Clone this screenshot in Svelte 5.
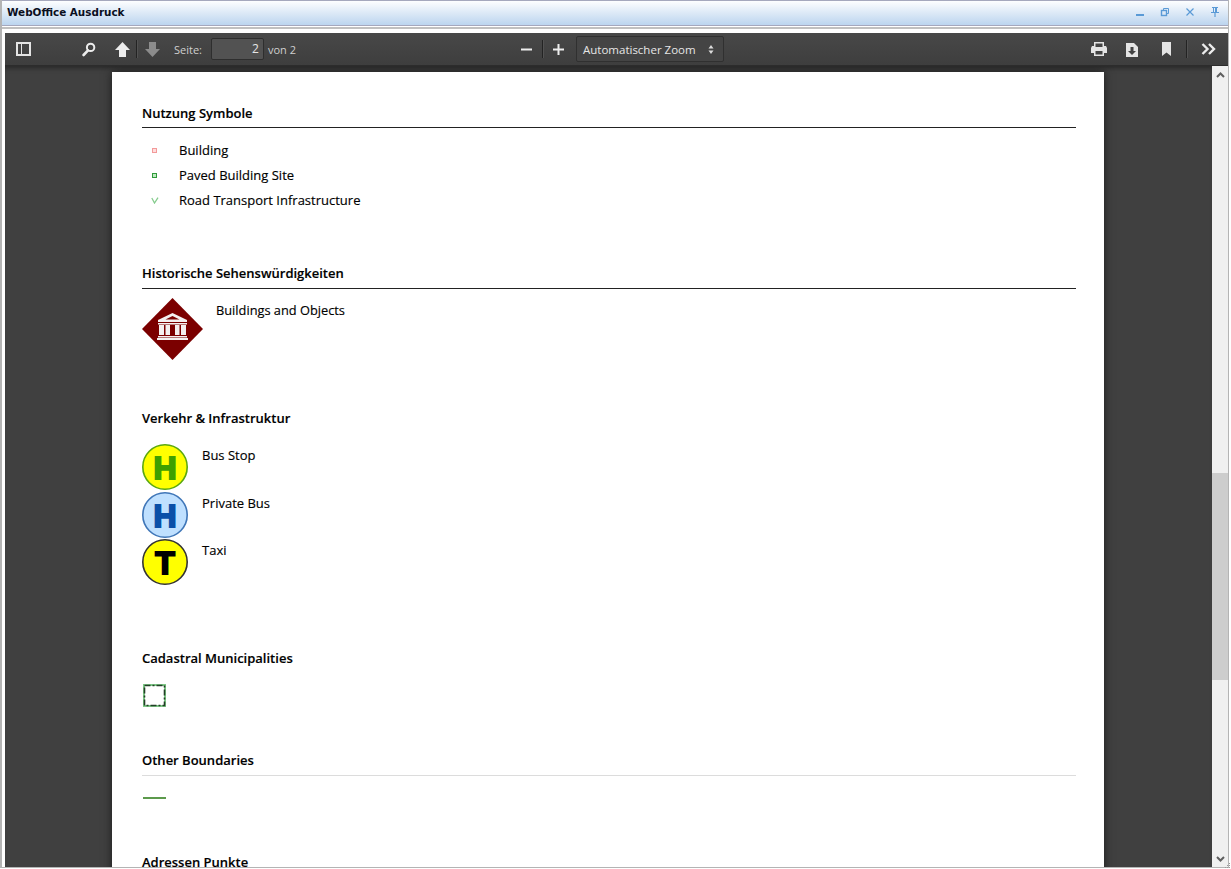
<script lang="ts">
  const usage = [
    { label: 'Building', kind: 'red' },
    { label: 'Paved Building Site', kind: 'green' },
    { label: 'Road Transport Infrastructure', kind: 'check' }
  ]
  const transport = [
    { label: 'Bus Stop', letter: 'H', fill: '#ffff00', ring: '#5aa80f', ink: '#3fa000' },
    { label: 'Private Bus', letter: 'H', fill: '#bfe0ff', ring: '#3f76b8', ink: '#0a4fa8' },
    { label: 'Taxi', letter: 'T', fill: '#ffff00', ring: '#333', ink: '#000' }
  ]
</script>

<div class="screen">
  <div class="window">
    <header class="titlebar">
      <span class="title">WebOffice Ausdruck</span>
      <div class="controls">
        <svg width="10" height="10" viewBox="0 0 10 10"><rect x="1" y="7" width="8" height="2" fill="#5a9ad6" /></svg>
        <svg width="10" height="10" viewBox="0 0 10 10" fill="none" stroke="#5a9ad6"><rect x="1.500" y="3.500" width="5" height="5" stroke-width="1.400" /><path d="M3.500 3V1.500h5v5H7" /></svg>
        <svg width="10" height="10" viewBox="0 0 10 10" fill="none" stroke="#5a9ad6" stroke-width="1.200"><path d="M1.500 1.500l7 7M8.500 1.500l-7 7" /></svg>
        <svg width="10" height="10" viewBox="0 0 10 10" fill="#5a9ad6"><path fill-rule="evenodd" d="M2 0h6v1H7v4h2v1H5.600v4H4.400V6H1V5h2V1H2zM4 1v4h1V1z" /></svg>
      </div>
    </header>

    <div class="frame">
      <div class="toolbar">
        <svg class="tb-sidebar" width="15" height="14" viewBox="0 0 15 14"><path fill-rule="evenodd" fill="#e4e4e4" d="M0 0h15v14H0zM2 2v10h3V2zM6 2v10h7V2z" /></svg>
        <svg class="tb-search" width="14" height="15" viewBox="0 0 14 15" fill="none" stroke="#ececec"><circle cx="8.600" cy="5.400" r="3.700" stroke-width="2" /><path d="M6 8.400L1.600 13" stroke-width="2.600" stroke-linecap="round" /></svg>
        <svg class="tb-up" width="15" height="15" viewBox="0 0 15 15"><path fill="#ededed" d="M7.500 0L15 8h-4v7H4V8H0z" /></svg>
        <span class="sep"></span>
        <svg class="tb-down" width="15" height="15" viewBox="0 0 15 15"><path fill="#8c8c8c" d="M4 0h7v7h4l-7.500 8L0 7h4z" /></svg>
        <span class="label seite">Seite:</span>
        <span class="page-input">2</span>
        <span class="label von">von 2</span>

        <div class="zoom">
          <svg width="11" height="11" viewBox="0 0 11 11"><rect y="4.500" width="11" height="2" fill="#ededed" /></svg>
          <span class="sep"></span>
          <svg width="11" height="11" viewBox="0 0 11 11"><path fill="#ededed" d="M4.500 0h2v4.500H11v2H6.500V11h-2V6.500H0v-2h4.500z" /></svg>
          <div class="select">
            <span>Automatischer Zoom</span>
            <svg width="6" height="9" viewBox="0 0 6 9"><path fill="#dcdcdc" d="M3 0l2.500 3.400h-5zM3 9L.5 5.600h5z" /></svg>
          </div>
        </div>

        <div class="tools-right">
          <svg width="16" height="14" viewBox="0 0 16 14"><path fill-rule="evenodd" fill="#e4e4e4" d="M3 0h10v4h2l1 2v5h-3v3H3v-3H0V6l1-2h2zM4.500 1.500V5h7V1.500zM4.500 9v3.500h7V9z" /></svg>
          <svg class="tb-dl" width="12" height="15" viewBox="0 0 12 15"><path fill-rule="evenodd" fill="#e4e4e4" d="M0 1h8l4 4v10H0zM4.500 5v4H2l4 4 4-4H7.500V5z" /></svg>
          <svg class="tb-mark" width="9" height="14" viewBox="0 0 9 14"><path fill="#e4e4e4" d="M0 0h9v14L4.500 10.500 0 14z" /></svg>
          <span class="sep"></span>
          <svg class="tb-more" width="15" height="12" viewBox="0 0 15 12" fill="none" stroke="#ececec" stroke-width="2.400"><path d="M1.500 1l5 5-5 5M8 1l5 5-5 5" /></svg>
        </div>
      </div>

      <div class="body">
        <main class="viewer">
          <article class="page">
            <section class="s-usage">
              <h3 class="ruled">Nutzung Symbole</h3>
              <ul class="usage">
                {#each usage as row}
                  <li>
                    <span class="mark">
                      {#if row.kind === 'check'}
                        <svg width="8" height="7" viewBox="0 0 8 7" fill="none" stroke="#86cc8e" stroke-width="1.300"><path d="M.8 1l2.700 5L7 .6" /></svg>
                      {:else}
                        <span class="dot {row.kind}"></span>
                      {/if}
                    </span>
                    {row.label}
                  </li>
                {/each}
              </ul>
            </section>

            <section class="s-hist">
              <h3 class="ruled">Historische Sehenswürdigkeiten</h3>
              <div class="hist-row">
                <svg width="61" height="62" viewBox="0 0 61 62">
                  <polygon points="30.500,0 61,31 30.500,62 0,31" fill="#7b0000" />
                  <g fill="#f4f0f0">
                    <path d="M30.500 15l14.500 7v2H16v-2z" />
                    <rect x="16" y="25" width="29" height="1.500" />
                    <rect x="17" y="27" width="5" height="10" />
                    <rect x="23.500" y="27" width="4.500" height="10" />
                    <rect x="33" y="27" width="4.500" height="10" />
                    <rect x="39" y="27" width="5" height="10" />
                    <rect x="16" y="38" width="29" height="1.500" />
                    <rect x="15" y="40" width="31" height="2" />
                  </g>
                  <path d="M30.500 18l7 3.500h-14z" fill="#7b0000" />
                </svg>
                <span>Buildings and Objects</span>
              </div>
            </section>

            <section class="s-traffic">
              <h3>Verkehr &amp; Infrastruktur</h3>
              <div class="stops">
                {#each transport as stop}
                  <div class="stop">
                    <svg width="46" height="46" viewBox="0 0 46 46">
                      <circle cx="23" cy="23" r="22.200" fill={stop.fill} stroke={stop.ring} stroke-width="1.600" />
                      <text x="23" y="34.500" text-anchor="middle" class="stop-letter" fill={stop.ink} stroke={stop.ink}>{stop.letter}</text>
                    </svg>
                    <span>{stop.label}</span>
                  </div>
                {/each}
              </div>
            </section>

            <section class="s-cadastral">
              <h3>Cadastral Municipalities</h3>
              <svg class="cadastral" width="23" height="23" viewBox="0 0 23 23" fill="none">
                <rect x="1" y="1" width="21" height="21" stroke="#7fc987" stroke-width="2" />
                <rect x="1.500" y="1.500" width="20" height="20" stroke="#233f27" stroke-width="1.600" stroke-dasharray="6 2 2 2" />
              </svg>
            </section>

            <section class="s-other">
              <h3 class="ruled light">Other Boundaries</h3>
              <span class="boundary"></span>
            </section>

            <section class="s-address">
              <h3>Adressen Punkte</h3>
            </section>
          </article>
        </main>

        <aside class="scrollbar">
          <button class="arrow" aria-label="up">
            <svg width="9" height="6" viewBox="0 0 9 6" fill="none" stroke="#5f5f5f" stroke-width="2"><path d="M1 5l3.500-3.500L8 5" /></svg>
          </button>
          <span class="gap-top"></span>
          <span class="thumb"></span>
          <span class="gap-bottom"></span>
          <button class="arrow" aria-label="down">
            <svg width="9" height="6" viewBox="0 0 9 6" fill="none" stroke="#5f5f5f" stroke-width="2"><path d="M1 1l3.500 3.500L8 1" /></svg>
          </button>
        </aside>
      </div>
    </div>
  </div>
  <svg class="grip" width="6" height="6" viewBox="0 0 6 6" fill="#9a9a9a"><rect x="4" y="0" width="1" height="1" /><rect x="2" y="2" width="1" height="1" /><rect x="4" y="2" width="1" height="1" /><rect x="0" y="4" width="1" height="1" /><rect x="2" y="4" width="1" height="1" /><rect x="4" y="4" width="1" height="1" /></svg>
</div>

<style>
  :global(body) {
    margin: 0;
    background: #fff;
  }

  .screen {
    position: relative;
    width: 1231px;
    height: 869px;
    overflow: hidden;
  }

  .grip {
    position: absolute;
    right: 0;
    bottom: 0;
  }

  .window {
    width: 1229px;
    height: 868px;
    box-sizing: border-box;
    display: flex;
    flex-direction: column;
    border-right: 1px solid #b4b4b4;
    border-bottom: 1px solid #b4b4b4;
    border-left: 2px solid #b4b4b4;
    overflow: hidden;
    font-family: 'Open Sans', sans-serif;
  }

  .titlebar {
    height: 26px;
    flex: none;
    box-sizing: border-box;
    margin: 0 -1px 0 -2px;
    display: flex;
    align-items: center;
    justify-content: space-between;
    padding: 0 8px 0 6px;
    border: 1px solid #a5a8bd;
    background: linear-gradient(#fdfeff, #e6eff9 35%, #bcd5ef);
  }

  .title {
    font: bold 10.400px 'DejaVu Sans', sans-serif;
    color: #0a0f1e;
    position: relative;
    top: -1px;
  }

  .controls {
    display: flex;
    gap: 15px;
    position: relative;
    top: -1px;
  }

  .frame {
    flex: 1;
    min-height: 0;
    display: flex;
    flex-direction: column;
    margin-top: 1px;
    border-top: 2px solid #c0c0c0;
    padding: 4px 0 0 3px;
  }

  .toolbar {
    height: 33px;
    flex: none;
    box-sizing: border-box;
    display: flex;
    align-items: center;
    background: linear-gradient(#484848, #3e3e3e);
    border-bottom: 1px solid #2c2c2c;
    box-shadow: 0 1px 0 #4c4c4c;
    color: #d9d9d9;
    font-size: 11px;
  }

  .sep {
    width: 1px;
    height: 18px;
    background: #232323;
    box-shadow: 1px 0 0 #525252;
    flex: none;
  }

  .tb-sidebar {
    margin-left: 11px;
  }

  .tb-search {
    margin-left: 51px;
  }

  .tb-up {
    margin-left: 19px;
    margin-right: 6px;
  }

  .tb-down {
    margin-left: 8px;
  }

  .label {
    color: #cfcfcf;
  }

  .seite {
    margin-left: 14px;
  }

  .page-input {
    width: 53px;
    height: 22px;
    box-sizing: border-box;
    margin-left: 9px;
    padding-right: 4px;
    text-align: right;
    line-height: 20px;
    font-size: 12px;
    color: #e6e6e6;
    background: #525252;
    border: 1px solid #2e2e2e;
    border-radius: 2px;
  }

  .von {
    margin-left: 4px;
  }

  .zoom {
    position: relative;
    display: flex;
    align-items: center;
    margin-left: 225px;
  }

  .zoom .sep {
    margin: 0 10px;
  }

  .select {
    width: 148px;
    height: 26px;
    box-sizing: border-box;
    margin-left: 12px;
    padding: 0 6px;
    display: flex;
    align-items: center;
    justify-content: space-between;
    background: #444;
    border: 1px solid #303030;
    border-radius: 2px;
    color: #e6e6e6;
    font-size: 11.500px;
  }

  .select svg {
    margin-right: 3px;
  }

  .tools-right {
    margin-left: auto;
    margin-right: 12px;
    display: flex;
    align-items: center;
  }

  .tools-right > svg:first-child {
    margin-right: -1px;
    position: relative;
    left: 1px;
  }

  .tb-dl {
    margin-left: 21px;
  }

  .tb-mark {
    margin-left: 24px;
  }

  .tools-right .sep {
    margin-left: 15px;
  }

  .tb-more {
    margin-left: 14px;
  }

  .body {
    flex: 1;
    min-height: 0;
    display: flex;
  }

  .viewer {
    flex: 1;
    min-width: 0;
    overflow: hidden;
    padding: 6px 0 0 107px;
    background: #404040;
    box-shadow: inset 0 5px 5px -3px #262626;
  }

  .page {
    width: 992px;
    min-height: 900px;
    box-sizing: border-box;
    padding: 32px 28px 0 30px;
    background: #fff;
    box-shadow: 0 0 9px #1c1c1c;
    color: #000;
    font-size: 13px;
    -webkit-text-stroke: 0.150px #000;
  }

  h3 {
    margin: 0;
    font-size: 13px;
    font-weight: 600;
    line-height: 18px;
    color: #000;
  }

  h3.ruled {
    padding-bottom: 5px;
    border-bottom: 1px solid #222;
  }

  h3.ruled.light {
    padding-bottom: 6px;
    border-bottom-color: #dcdcdc;
  }

  .usage {
    list-style: none;
    margin: 10px 0 0;
    padding: 0;
  }

  .usage li {
    height: 25px;
    display: flex;
    align-items: center;
    line-height: 25px;
  }

  .mark {
    width: 37px;
    display: flex;
    justify-content: center;
    padding-right: 12px;
    box-sizing: border-box;
  }

  .dot {
    width: 5px;
    height: 5px;
    box-sizing: border-box;
    border: 1.500px solid;
  }

  .dot.red {
    background: #fdd;
    border-color: #f39a9a;
  }

  .dot.green {
    background: #bfeac2;
    border-color: #2f9a3a;
  }

  .s-hist {
    margin-top: 51px;
  }

  .s-hist h3 {
    padding-bottom: 6px;
  }

  .hist-row {
    display: flex;
    margin-top: 9px;
    gap: 13px;
  }

  .hist-row span {
    line-height: 25px;
    font-size: 12.800px;
  }

  .s-traffic {
    margin-top: 49px;
  }

  .stops {
    margin-top: 17px;
  }

  .stop {
    display: flex;
    height: 47.700px;
    gap: 14px;
  }

  .stop span {
    line-height: 22px;
  }

  .stop-letter {
    font: 900 32px 'Liberation Sans', sans-serif;
    stroke-width: 2px;
  }

  .s-cadastral {
    margin-top: 62px;
  }

  .cadastral {
    display: block;
    margin: 17px 0 0 1px;
  }

  .s-other {
    margin-top: 44px;
  }

  .boundary {
    display: block;
    width: 23px;
    height: 2px;
    margin: 21px 0 0 1px;
    background: #5c9a4c;
  }

  .s-address {
    margin-top: 54px;
  }

  .scrollbar {
    width: 16px;
    flex: none;
    display: flex;
    flex-direction: column;
    background: #f0f0f0;
  }

  .arrow {
    height: 17px;
    padding: 0;
    flex: none;
    display: flex;
    align-items: center;
    justify-content: center;
    border: 0;
    background: transparent;
  }

  .gap-top {
    height: 390px;
  }

  .thumb {
    height: 207px;
    background: #cdcdcd;
  }

  .gap-bottom {
    flex: 1;
  }
</style>
